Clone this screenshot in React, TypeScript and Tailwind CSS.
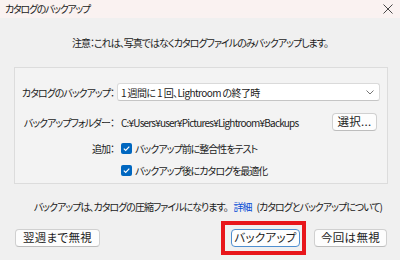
import React from "react"

const font =
  "font-['Noto_Sans_CJK_JP','Noto_Sans',sans-serif] [font-feature-settings:'palt'] tracking-[-1px] whitespace-nowrap"

function Button({ label, primary, className = "" }: { label: string; primary?: boolean; className?: string }) {
  return (
    <div
      className={`h-[18px] flex items-center justify-center rounded-[4px] bg-[#fdfdfd] text-[11.5px] tracking-[0.3px] text-[#1b1b1b] border ${
        primary ? "border-[#4f8fd0]" : "border-[#d0d0d0] border-b-[#bdbdbd]"
      } ${className}`}
    >
      {label}
    </div>
  )
}

function Check({ label }: { label: string }) {
  return (
    <div className="flex items-center gap-[3px]">
      <div className="w-[11px] h-[11px] rounded-[2px] bg-[#0067c0] flex items-center justify-center">
        <svg width="9" height="9" viewBox="0 0 9 9">
          <path d="M1.8 4.6 L3.7 6.4 L7.3 2.6" fill="none" stroke="white" strokeWidth="1.2" />
        </svg>
      </div>
      <span>{label}</span>
    </div>
  )
}

export default function App() {
  return (
    <div className={`w-[400px] h-[260px] bg-[#f0f0f0] text-[#1b1b1b] text-[10px] overflow-hidden ${font}`}>
      {/* title bar */}
      <div className="h-[18px] bg-[#faf2f1] flex items-center justify-between pl-[5px] pr-[7px]">
        <span className="text-[10px] leading-none tracking-[-1.3px]">カタログのバックアップ</span>
        <svg width="10" height="10" viewBox="0 0 10 10">
          <path d="M0.5 0.5 L9.5 9.5 M9.5 0.5 L0.5 9.5" stroke="#333" strokeWidth="0.9" />
        </svg>
      </div>

      <div className="pt-[18px] text-center leading-[14px]">
        注意：これは、写真ではなくカタログファイルのみバックアップします。
      </div>

      {/* group box */}
      <div className="mt-[17px] ml-[14px] w-[374px] h-[117px] border border-[#dcdcdc] bg-[#f3f3f3] pt-[15px]">
        <div className="flex items-center h-[18px]">
          <span className="w-[99px] text-right">カタログのバックアップ：</span>
          <div className="ml-[3px] w-[263px] h-[18px] bg-white border border-[#dadada] border-b-[#c5c5c5] rounded-[3px] flex items-center justify-between pl-[3px] pr-[5px]">
            <span className="tracking-[-0.6px]">1 週間に 1 回、Lightroom の終了時</span>
            <svg width="8" height="5" viewBox="0 0 8 5">
              <path d="M0.5 0.5 L4 4 L7.5 0.5" fill="none" stroke="#666" strokeWidth="0.9" />
            </svg>
          </div>
        </div>

        <div className="flex items-center h-[18px] mt-[12px]">
          <span className="w-[99px] text-right">バックアップフォルダー：</span>
          <span className="ml-[7px] flex-1 tracking-[-0.8px]">C:¥Users¥user¥Pictures¥Lightroom¥Backups</span>
          <Button label="選択..." className="w-[45px] mr-[10px]" />
        </div>

        <div className="flex items-center h-[14px] mt-[10px]">
          <span className="w-[99px] text-right">追加：</span>
          <div className="ml-[7px]">
            <Check label="バックアップ前に整合性をテスト" />
          </div>
        </div>

        <div className="flex items-center h-[14px] mt-[8px] pl-[106px]">
          <Check label="バックアップ後にカタログを最適化" />
        </div>
      </div>

      <div className="mt-[16px] pr-[18px] flex justify-end leading-[14px]">
        <span>
          バックアップは、カタログの圧縮ファイルになります。
          <span className="ml-[6px] text-[#0a4fd6]">詳細</span>
          <span className="ml-[5px]">(カタログとバックアップについて)</span>
        </span>
      </div>

      <div className="mt-[15px] flex items-center pl-[15px] pr-[13px]">
        <Button label="翌週まで無視" className="w-[85px]" />
        <div className="flex-1" />
        <div className="border-[4px] border-[#e8161b] pl-[6px] pr-[2px] py-[4px] -my-[8px]">
          <Button label="バックアップ" primary className="w-[69px]" />
        </div>
        <Button label="今回は無視" className="w-[73px] ml-[8px]" />
      </div>
    </div>
  )
}
